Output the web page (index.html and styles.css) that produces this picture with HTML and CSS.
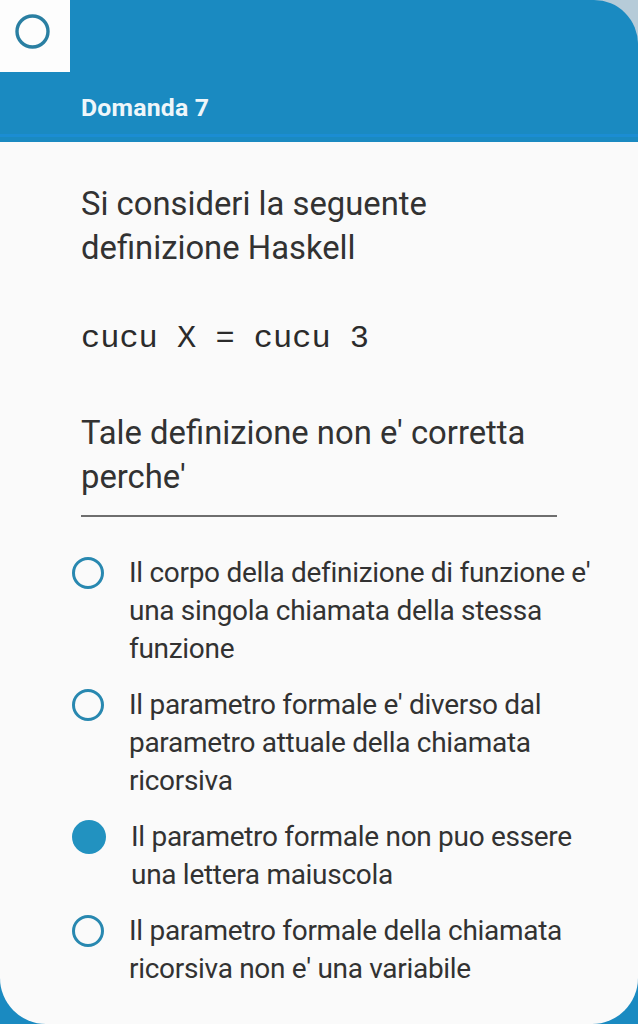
FILE: index.html
```html
<!DOCTYPE html>
<html lang="it">
<head>
<meta charset="utf-8">
<title>Domanda 7</title>
<link rel="stylesheet" href="styles.css">
</head>
<body>
<div class="screen">
  <div class="header-wrap">
    <header class="header">
      <div class="logo-box">
        <svg width="70" height="72" viewBox="0 0 70 72"><circle cx="32.5" cy="31.5" r="15.5" fill="none" stroke="#2a7fa2" stroke-width="3.4"/></svg>
      </div>
      <h1 class="title">Domanda 7</h1>
    </header>
  </div>
  <main class="card">
    <p class="question">Si consideri la seguente definizione Haskell</p>
    <p class="code">cucu X = cucu 3</p>
    <p class="question q2">Tale definizione non e' corretta perche'</p>
    <hr class="divider">
    <ul class="options">
      <li class="option">
        <span class="radio"></span>
        <span class="label">Il corpo della definizione di funzione e' una singola chiamata della stessa funzione</span>
      </li>
      <li class="option">
        <span class="radio"></span>
        <span class="label">Il parametro formale e' diverso dal parametro attuale della chiamata ricorsiva</span>
      </li>
      <li class="option">
        <span class="radio checked"></span>
        <span class="label">Il parametro formale non puo essere una lettera maiuscola</span>
      </li>
      <li class="option">
        <span class="radio"></span>
        <span class="label">Il parametro formale della chiamata ricorsiva non e' una variabile</span>
      </li>
    </ul>
  </main>
</div>
</body>
</html>
```

FILE: styles.css
```css
html, body {
  margin: 0;
  padding: 0;
}
body {
  background: #1a8ac1;
  font-family: Roboto, "Noto Sans", sans-serif;
}
.screen {
  width: 638px;
  height: 1024px;
  background: #1a8ac1;
  display: flex;
  flex-direction: column;
  overflow: hidden;
}
.header-wrap {
  background: #b6cbd8;
}
.header {
  position: relative;
  height: 134px;
  background: #1a8ac1;
  border-top-right-radius: 44px;
  border-bottom: 3px solid #1b8dd3;
  box-shadow: 0 5px 0 #1a8ac1;
  margin-bottom: 5px;
}
.logo-box {
  position: absolute;
  left: 0;
  top: 0;
  width: 70px;
  height: 72px;
  background: #fdfdfd;
}
.logo-box svg {
  display: block;
}
.title {
  margin: 0;
  position: absolute;
  left: 81px;
  top: 92px;
  font-size: 24.8px;
  font-weight: 700;
  color: #eef6fa;
  line-height: 32px;
  letter-spacing: 0.2px;
}
.card {
  flex: 1;
  background: #fafafa;
  border-bottom-left-radius: 46px;
  border-bottom-right-radius: 46px;
  padding: 40px 70px 0 81px;
}
.question {
  margin: 0;
  font-size: 32.8px;
  line-height: 44px;
  color: #323232;
}
.code {
  margin: 47px 0 0;
  font-family: "Liberation Mono", "Courier New", monospace;
  font-size: 32px;
  line-height: 44px;
  color: #2b2b2b;
  white-space: pre;
}
.q2 {
  margin-top: 50px;
}
.divider {
  margin: 16px 11px 0 0;
  border: 0;
  height: 2px;
  background: #6e6e6e;
}
.options {
  list-style: none;
  margin: 37px -42px 0 -9px;
  padding: 0;
  display: flex;
  flex-direction: column;
  gap: 18px;
}
.option {
  display: flex;
  align-items: flex-start;
  gap: 25px;
}
.radio {
  flex: none;
  box-sizing: border-box;
  width: 32px;
  height: 32px;
  border: 3.5px solid #2888b0;
  border-radius: 50%;
  margin-top: 3px;
}
.radio.checked {
  width: 34px;
  height: 34px;
  border: 0;
  margin-top: 2px;
  background: #2292c0;
}
.label {
  font-size: 28px;
  line-height: 38px;
  letter-spacing: -0.3px;
  color: #323232;
}
```
